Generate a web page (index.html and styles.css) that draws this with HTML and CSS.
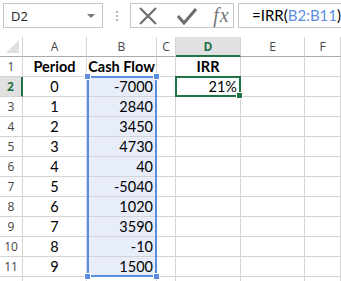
FILE: index.html
```html
<!DOCTYPE html>
<html lang="en">
<head>
    <meta charset="UTF-8">
    <title>IRR</title>
    <link rel="stylesheet" href="styles.css">
</head>
<body>

<div class="toolbar">
    <div class="name-box">
        <span>D2</span>
        <span class="arrow"></span>
    </div>
    <div class="dots"><i></i><i></i><i></i></div>
    <div class="actions">
        <svg width="20" height="18" viewBox="0 0 20 18"><path d="M2 1 L18 17 M18 1 L2 17" stroke="#6e6e6e" stroke-width="2.2" fill="none"/></svg>
        <svg width="20" height="18" viewBox="0 0 20 18"><path d="M1 9 L7 16 L19 2" stroke="#6e6e6e" stroke-width="3" fill="none"/></svg>
        <span class="fx">fx</span>
    </div>
    <div class="formula">=IRR(<span class="ref">B2:B11</span>)</div>
</div>

<div class="sheet">
    <div class="corner"><span class="tri"></span></div>
    <div class="col-head">A</div>
    <div class="col-head">B</div>
    <div class="col-head">C</div>
    <div class="col-head active">D</div>
    <div class="col-head">E</div>
    <div class="col-head">F</div>

    <div class="row-head">1</div>
    <div class="cell bold center">Period</div>
    <div class="cell bold center">Cash Flow</div>
    <div class="cell"></div>
    <div class="cell bold center">IRR</div>
    <div class="cell"></div>
    <div class="cell"></div>

    <div class="row-head active">2</div>
    <div class="cell center">0</div>
    <div class="cell num range">-7000</div>
    <div class="cell"></div>
    <div class="cell num">21%</div>
    <div class="cell"></div>
    <div class="cell"></div>

    <div class="row-head">3</div>
    <div class="cell center">1</div>
    <div class="cell num range">2840</div>
    <div class="cell"></div><div class="cell"></div><div class="cell"></div><div class="cell"></div>

    <div class="row-head">4</div>
    <div class="cell center">2</div>
    <div class="cell num range">3450</div>
    <div class="cell"></div><div class="cell"></div><div class="cell"></div><div class="cell"></div>

    <div class="row-head">5</div>
    <div class="cell center">3</div>
    <div class="cell num range">4730</div>
    <div class="cell"></div><div class="cell"></div><div class="cell"></div><div class="cell"></div>

    <div class="row-head">6</div>
    <div class="cell center">4</div>
    <div class="cell num range">40</div>
    <div class="cell"></div><div class="cell"></div><div class="cell"></div><div class="cell"></div>

    <div class="row-head">7</div>
    <div class="cell center">5</div>
    <div class="cell num range">-5040</div>
    <div class="cell"></div><div class="cell"></div><div class="cell"></div><div class="cell"></div>

    <div class="row-head">8</div>
    <div class="cell center">6</div>
    <div class="cell num range">1020</div>
    <div class="cell"></div><div class="cell"></div><div class="cell"></div><div class="cell"></div>

    <div class="row-head">9</div>
    <div class="cell center">7</div>
    <div class="cell num range">3590</div>
    <div class="cell"></div><div class="cell"></div><div class="cell"></div><div class="cell"></div>

    <div class="row-head">10</div>
    <div class="cell center">8</div>
    <div class="cell num range">-10</div>
    <div class="cell"></div><div class="cell"></div><div class="cell"></div><div class="cell"></div>

    <div class="row-head">11</div>
    <div class="cell center">9</div>
    <div class="cell num range">1500</div>
    <div class="cell"></div><div class="cell"></div><div class="cell"></div><div class="cell"></div>

    <div class="row-head"></div>
    <div class="cell"></div><div class="cell"></div><div class="cell"></div>
    <div class="cell"></div><div class="cell"></div><div class="cell"></div>

    <!-- overlays: formula range and active cell -->
    <div class="range-box">
        <span class="h tl"></span><span class="h tr"></span>
        <span class="h bl"></span><span class="h br"></span>
    </div>
    <div class="active-box"><span class="fill"></span></div>
</div>

</body>
</html>
```

FILE: styles.css
```css
body {
    margin: 0;
    width: 341px;
    height: 281px;
    background: #ffffff;
    font-family: "Open Sans", "Noto Sans", sans-serif;
    overflow: hidden;
}
.toolbar {
    height: 37px;
    display: flex;
    align-items: flex-start;
    padding: 3px 0 0 3px;
    box-sizing: border-box;
}
.name-box {
    width: 104px;
    height: 25px;
    border: 1px solid #c6c6c6;
    box-sizing: border-box;
    display: flex;
    align-items: center;
    justify-content: space-between;
    padding: 0 7px 0 7px;
    font-size: 13px;
    color: #222;
}
.arrow {
    width: 0;
    height: 0;
    border-left: 4px solid transparent;
    border-right: 4px solid transparent;
    border-top: 4px solid #777;
}
.dots {
    width: 28px;
    height: 25px;
    display: flex;
    flex-direction: column;
    align-items: center;
    justify-content: center;
    gap: 2px;
}
.dots i {
    width: 2px;
    height: 2px;
    background: #b5b5b5;
}
.actions {
    width: 108px;
    height: 25px;
    border: 1px solid #c6c6c6;
    box-sizing: border-box;
    display: flex;
    align-items: center;
    padding-left: 7px;
    gap: 19px;
}
.fx {
    font-family: "Liberation Serif", serif;
    font-style: italic;
    font-size: 20px;
    color: #777;
    margin-left: -3px;
    letter-spacing: 1px;
}
.formula {
    flex: 1;
    height: 25px;
    margin-left: 4px;
    border: 1px solid #c6c6c6;
    border-right: none;
    box-sizing: border-box;
    padding-left: 13px;
    font-family: "Lato", sans-serif;
    font-size: 15px;
    line-height: 23px;
    color: #000;
}
.formula .ref {
    color: #5b8de2;
}
.sheet {
    position: relative;
    height: 244px;
    overflow: hidden;
    display: grid;
    grid-template-columns: 23px 64px 70px 19px 65px 64px 36px;
    grid-auto-rows: 20px;
}
.corner, .col-head, .row-head, .cell {
    box-sizing: border-box;
    border-right: 1px solid #d4d4d4;
    border-bottom: 1px solid #d4d4d4;
}
.corner {
    position: relative;
    border-bottom-color: #ababab;
}
.tri {
    position: absolute;
    right: 3px;
    bottom: 3px;
    width: 0;
    height: 0;
    border-left: 13px solid transparent;
    border-bottom: 13px solid #dfdfdf;
}
.col-head {
    font-size: 12px;
    color: #444;
    text-align: center;
    line-height: 19px;
    border-bottom-color: #ababab;
}
.col-head.active {
    background: #e1e1e1;
    color: #217346;
    font-weight: bold;
    border-bottom: 2px solid #217346;
}
.row-head {
    font-size: 12px;
    color: #444;
    text-align: center;
    line-height: 19px;
}
.row-head.active {
    background: #e1e1e1;
    color: #217346;
    font-weight: bold;
    border-right: 2px solid #217346;
}
.cell {
    font-family: "Lato", sans-serif;
    font-size: 14.5px;
    line-height: 19px;
    color: #000;
    padding: 0 3px;
    white-space: nowrap;
}
.bold {
    font-weight: bold;
}
.center {
    text-align: center;
    padding: 0;
}
.num {
    text-align: right;
}
.range {
    background: #e8eef9;
}
.range-box {
    position: absolute;
    left: 87px;
    top: 39px;
    width: 70px;
    height: 201px;
    border: 2px solid #5b8de2;
    box-sizing: border-box;
}
.h {
    position: absolute;
    width: 5px;
    height: 5px;
    background: #5b8de2;
    border: 1px solid #ffffff;
}
.tl { left: -5px; top: -5px; }
.tr { right: -5px; top: -5px; }
.bl { left: -5px; bottom: -5px; }
.br { right: -5px; bottom: -5px; }
.active-box {
    position: absolute;
    left: 175px;
    top: 39px;
    width: 66px;
    height: 21px;
    border: 2px solid #217346;
    box-sizing: border-box;
}
.fill {
    position: absolute;
    right: -4px;
    bottom: -4px;
    width: 5px;
    height: 5px;
    background: #217346;
    border: 1px solid #ffffff;
}
```
